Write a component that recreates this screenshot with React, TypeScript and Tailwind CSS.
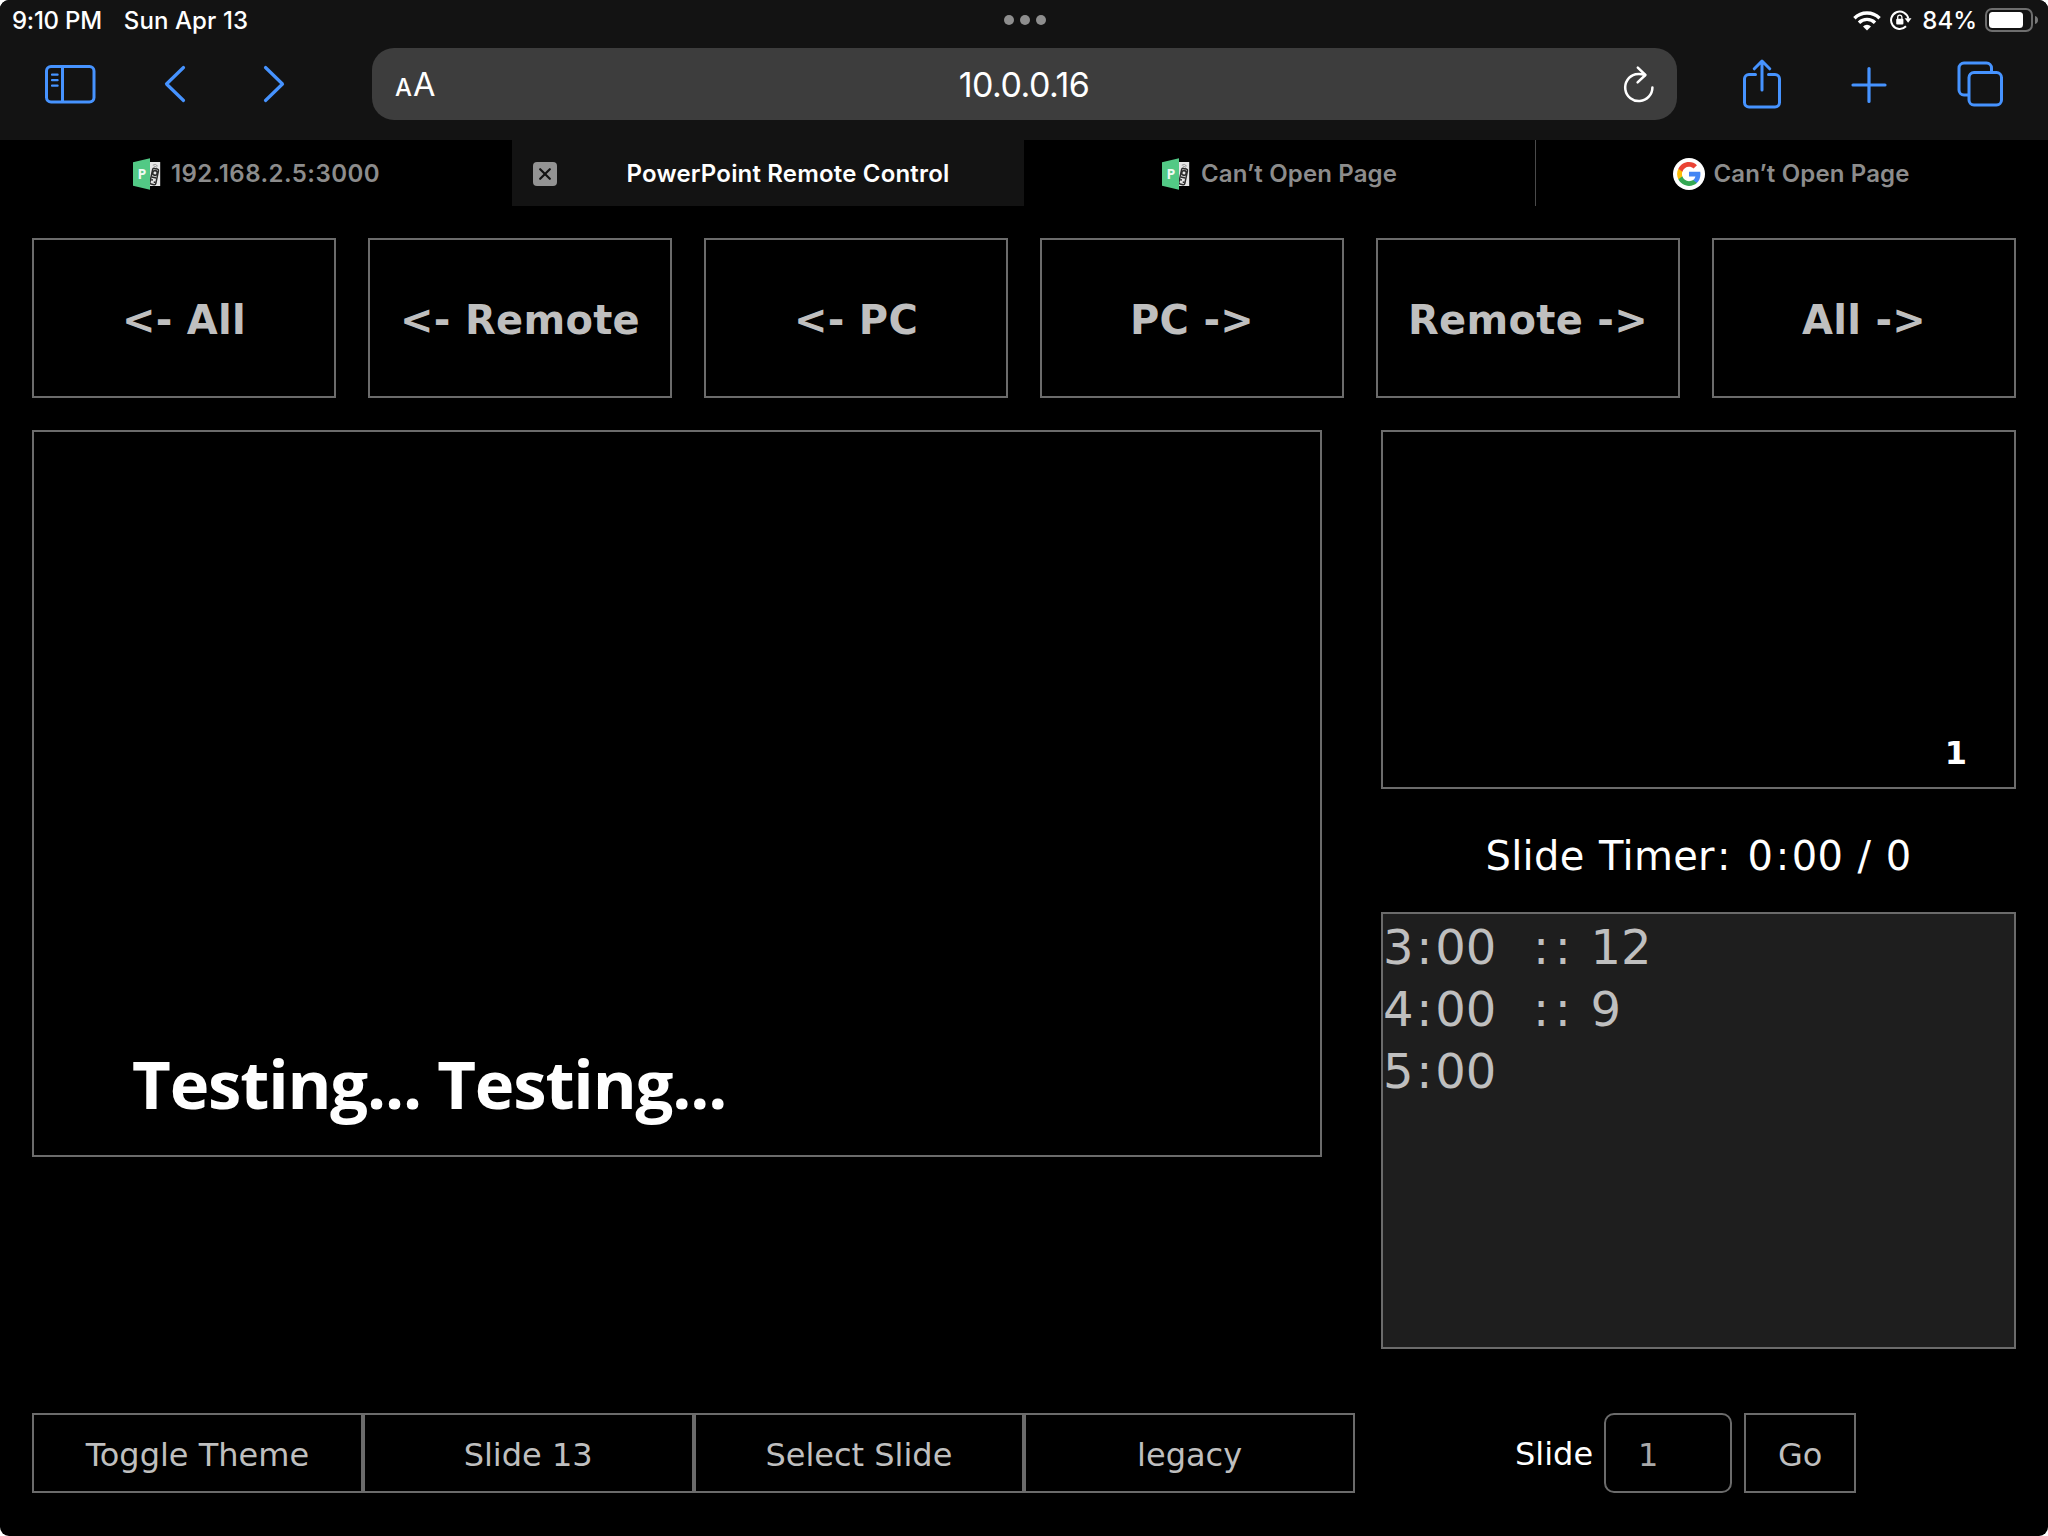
import React from "react";

const BLUE = "#4693ff";

function SidebarIcon() {
  return (
    <svg width="52" height="40" viewBox="0 0 52 40" fill="none" stroke={BLUE} strokeWidth="3">
      <rect x="2.5" y="2.5" width="47.5" height="35.5" rx="4.5" />
      <path d="M18.5 2.5v35.5" />
      <path d="M8 10.700h5.600M8 16.200h5.600M8 21.700h5.600" strokeWidth="2.2" strokeLinecap="round" />
    </svg>
  );
}

function Chevron({ flip = false }: { flip?: boolean }) {
  return (
    <svg width="22" height="38" viewBox="0 0 22 38" fill="none" stroke={BLUE} strokeWidth="3.2" strokeLinecap="round" strokeLinejoin="round" className={flip ? "rotate-180" : ""}>
      <path d="M19.5 2.5L2.500 19l17 16.500" />
    </svg>
  );
}

function ReloadIcon() {
  return (
    <svg width="32" height="38" viewBox="0 0 32 38" fill="none" stroke="#fff" strokeWidth="2.5" strokeLinecap="round" strokeLinejoin="round">
      <path d="M29.400 22.500A13.600 13.600 0 1 1 12.500 9.300Q17 8.300 22 10" />
      <path d="M14.800 2.600l7.600 7.400-7.800 7.400" />
    </svg>
  );
}

function ShareIcon() {
  return (
    <svg width="40" height="50" viewBox="0 0 40 50" fill="none" stroke={BLUE} strokeWidth="3" strokeLinecap="round" strokeLinejoin="round">
      <path d="M13.500 15.500H7A4.500 4.500 0 0 0 2.500 20v23.500A4.500 4.500 0 0 0 7 48h26a4.500 4.500 0 0 0 4.500-4.500V20a4.500 4.500 0 0 0-4.500-4.500h-6.500" />
      <path d="M20 31V3M12.300 9.800L20 2l7.700 7.800" />
    </svg>
  );
}

function PlusIcon() {
  return (
    <svg width="36" height="36" viewBox="0 0 36 36" fill="none" stroke={BLUE} strokeWidth="3.2" strokeLinecap="round">
      <path d="M18 1.600v32.800M2 18h32" />
    </svg>
  );
}

function TabsIcon() {
  return (
    <svg width="46" height="46" viewBox="0 0 46 46" fill="none" stroke={BLUE} strokeWidth="3">
      <path d="M12 34H7a5 5 0 0 1-5-5V7a5 5 0 0 1 5-5h22.500a5 5 0 0 1 5 5v4.500" />
      <rect x="12" y="11.500" width="32.500" height="32.500" rx="5" />
    </svg>
  );
}

function WifiIcon() {
  return (
    <svg width="28" height="21" viewBox="0 0 28 21" fill="none" stroke="#fff" strokeWidth="3.400">
      <path d="M1.400 8.200a18 18 0 0 1 25.200 0" />
      <path d="M6 12.700a11.400 11.400 0 0 1 16 0" />
      <path d="M14 20.500l-4-4a5.700 5.700 0 0 1 8 0z" fill="#fff" stroke="none" />
    </svg>
  );
}

function RotationLockIcon() {
  return (
    <svg width="22" height="20" viewBox="0 0 22 20" fill="none">
      <path d="M16 16.300A8.700 8.700 0 1 1 18.300 8.500" stroke="#fff" strokeWidth="2" />
      <path d="M14.600 8.200h6.900l-3.400 4.600z" fill="#fff" />
      <rect x="6.200" y="8.700" width="7.200" height="5.900" rx="1" fill="#fff" />
      <path d="M7.700 9V7.300a2.100 2.100 0 0 1 4.200 0V9" stroke="#fff" strokeWidth="1.300" />
    </svg>
  );
}

function BatteryIcon() {
  return (
    <svg width="54" height="24" viewBox="0 0 54 24" fill="none">
      <rect x="1" y="1" width="46" height="22" rx="6" stroke="#6e6e6e" strokeWidth="2" />
      <rect x="4" y="4" width="34" height="16" rx="3.500" fill="#fff" />
      <path d="M50 8c2 .6 3 2 3 4s-1 3.400-3 4z" fill="#7a7a7a" />
    </svg>
  );
}

function RemoteFavicon() {
  return (
    <svg width="28" height="32" viewBox="0 0 28 32" className="shrink-0">
      <path d="M15 4h12.200v24H15z" fill="#e6e6e6" />
      <g transform="rotate(12 21 18)" fill="none" stroke="#2b2b2b">
        <rect x="18.300" y="10.500" width="6" height="16" rx="1.500" strokeWidth="1.500" />
        <circle cx="21.300" cy="14.800" r="2.300" strokeWidth="1.700" />
        <path d="M19 19.500h4.600M19 22.200h1.800M22 24h1.800" strokeWidth="1.500" />
      </g>
      <path d="M19.800 7.200q2.800-2 5 1M20.800 9q1.800-1.200 3.200.4" stroke="#8a8a8a" strokeWidth=".9" fill="none" />
      <path d="M0 4.200L17 .3v31.400L0 27.800z" fill="#52c985" />
      <text x="4.600" y="20.700" fill="#eefaf3" fontFamily="Open Sans, sans-serif" fontWeight="700" fontSize="14">P</text>
    </svg>
  );
}

function GoogleFavicon() {
  return (
    <svg width="32" height="32" viewBox="0 0 32 32" className="shrink-0">
      <circle cx="16" cy="16" r="16" fill="#fff" />
      <g transform="translate(3 3) scale(1.083)">
        <path fill="#4285F4" d="M22.560 12.250c0-.78-.07-1.530-.2-2.250H12v4.260h5.920c-.26 1.370-1.040 2.530-2.210 3.310v2.770h3.570c2.080-1.920 3.280-4.740 3.280-8.090z" />
        <path fill="#34A853" d="M12 23c2.970 0 5.460-.98 7.280-2.660l-3.570-2.770c-.98.66-2.230 1.060-3.710 1.060-2.860 0-5.290-1.930-6.160-4.530H2.180v2.840C3.990 20.530 7.700 23 12 23z" />
        <path fill="#FBBC05" d="M5.840 14.090c-.22-.66-.35-1.360-.35-2.090s.13-1.430.35-2.090V7.070H2.180C1.430 8.550 1 10.220 1 12s.43 3.450 1.180 4.930l3.660-2.840z" />
        <path fill="#EA4335" d="M12 5.380c1.620 0 3.060.56 4.210 1.640l3.150-3.150C17.450 2.090 14.970 1 12 1 7.700 1 3.990 3.470 2.180 7.070l3.660 2.840c.87-2.600 3.300-4.530 6.160-4.530z" />
      </g>
    </svg>
  );
}

function StatusBar() {
  return (
    <div className="grid h-10 grid-cols-3 items-center pl-3 pr-[9px] text-[24px] leading-none font-medium text-white">
      <div className="flex gap-[22px] pt-px">
        <span className="tracking-[-0.25px]">9:10 PM</span>
        <span className="tracking-[0.1px]">Sun Apr 13</span>
      </div>
      <div className="flex justify-center gap-1.5 pr-px">
        <span className="size-2.5 rounded-full bg-[#8e8e8e]" />
        <span className="size-2.5 rounded-full bg-[#8e8e8e]" />
        <span className="size-2.5 rounded-full bg-[#8e8e8e]" />
      </div>
      <div className="flex items-center justify-end">
        <WifiIcon />
        <span className="mr-2.5 ml-[9px]"><RotationLockIcon /></span>
        <span className="mr-2 pt-px">84%</span>
        <BatteryIcon />
      </div>
    </div>
  );
}

function Toolbar() {
  return (
    <div className="flex h-[100px] items-start pt-2">
      <div className="flex h-[72px] w-[372px] items-center pl-11">
        <SidebarIcon />
        <span className="ml-[68px]"><Chevron /></span>
        <span className="ml-[77px]"><Chevron flip /></span>
      </div>
      <div className="grid h-[72px] w-[1305px] grid-cols-3 items-center rounded-[22px] bg-[#3d3d3d] px-[22px] text-white">
        <div className="flex items-baseline gap-px pt-0.5 pl-px leading-none">
          <span className="text-[24px] font-medium">A</span>
          <span className="text-[32.500px]">A</span>
        </div>
        <div className="pt-px pr-px text-center text-[34px] leading-none tracking-[-0.5px]">10.0.0.16</div>
        <div className="flex justify-end"><ReloadIcon /></div>
      </div>
      <div className="flex h-[72px] flex-1 items-center pl-[65px]">
        <ShareIcon />
        <span className="ml-[69px] pt-px"><PlusIcon /></span>
        <span className="ml-[70px]"><TabsIcon /></span>
      </div>
    </div>
  );
}

function TabBar() {
  const idle = "flex items-center justify-center pt-[2px] text-[#8c8c8c]";
  return (
    <div className="grid h-[66px] grid-cols-4 text-[24px] leading-none font-semibold tracking-[0.150px]">
      <div className={idle + " gap-2.5 pl-px tracking-[0.450px]"}><RemoteFavicon />192.168.2.5:3000</div>
      <div className="flex items-center bg-[#131313] pt-[2px] pl-[21px] text-white">
        <span className="flex size-6 items-center justify-center rounded-[4px] bg-[#939393]">
          <svg width="12" height="12" viewBox="0 0 12 12" stroke="#131313" strokeWidth="2.200" strokeLinecap="round">
            <path d="M1.200 1.200l9.600 9.600M10.800 1.200l-9.600 9.600" />
          </svg>
        </span>
        <span className="flex-1 pr-[10px] pl-[5px] text-center tracking-[0.180px]">PowerPoint Remote Control</span>
      </div>
      <div className={idle + " gap-[11px] border-r border-[#4a4a4a]"}><RemoteFavicon />Can’t Open Page</div>
      <div className={idle + " gap-2 pr-px"}><GoogleFavicon />Can’t Open Page</div>
    </div>
  );
}

function Wide({ text }: { text: string }) {
  return (
    <>
      {text.split(/(:)/).map((part, i) =>
        part === ":" ? <span key={i} className="mx-[0.058em]">:</span> : <React.Fragment key={i}>{part}</React.Fragment>
      )}
    </>
  );
}

const NAV = ["<- All", "<- Remote", "<- PC", "PC ->", "Remote ->", "All ->"];
const ACTIONS = ["Toggle Theme", "Slide 13", "Select Slide", "legacy"];
const NOTES = ["3:00  :: 12", "4:00  :: 9", "5:00"];

export default function App() {
  return (
    <div className="h-[1536px] w-[2048px] bg-white">
      <div className="h-full w-full overflow-hidden rounded-[9px] bg-black">
        <header className="font-['Inter',sans-serif]">
          <div className="bg-[#131313]">
            <StatusBar />
            <Toolbar />
          </div>
          <TabBar />
        </header>
        <main className="px-8 pt-8 font-['DejaVu_Sans',sans-serif] text-[#bfbfbf]">
          <div className="grid grid-cols-6 gap-8">
            {NAV.map((label) => (
              <button key={label} className="h-[160px] border-2 border-[#6b6b6b] pt-1 text-[40px] font-bold tracking-[0.3px] whitespace-nowrap">
                {label}
              </button>
            ))}
          </div>
          <div className="mt-8 flex h-[919px] items-start justify-between">
            <section className="flex h-[727px] w-[1290px] items-end border-2 border-[#6b6b6b] pb-[32px] pl-[98px]">
              <p className="font-['Open_Sans',sans-serif] text-[67px] leading-[80px] font-bold tracking-[-1.150px] whitespace-nowrap text-white">Testing... Testing...</p>
            </section>
            <aside className="w-[635px]">
              <div className="flex h-[359px] items-end justify-end border-2 border-[#6b6b6b] pr-[47px] pb-[15px] text-[32px] leading-[38px] font-bold text-white">1</div>
              <p className="flex h-[123px] items-center justify-center pt-2.5 text-[40px] tracking-[0.3px] whitespace-pre text-white">
                <span className="[word-spacing:0.034em]"><Wide text="Slide Timer: 0:00 / 0" /></span>
              </p>
              <div className="h-[437px] border-2 border-[#6b6b6b] bg-[#1e1e1e] pt-[2px] text-[48px] leading-[62px] whitespace-pre [word-spacing:0.034em]">
                {NOTES.map((n) => (
                  <p key={n}><Wide text={n} /></p>
                ))}
              </div>
            </aside>
          </div>
          <footer className="mt-16 flex h-20 items-center text-[32px]">
            <div className="grid h-20 w-[1323px] grid-cols-4">
              {ACTIONS.map((a) => (
                <button key={a} className="border-2 border-[#6b6b6b] pt-1">{a}</button>
              ))}
            </div>
            <span className="ml-[160px] pt-0.5 text-white">Slide</span>
            <span className="ml-[11px] flex h-20 w-32 items-center rounded-[10px] border-2 border-[#6b6b6b] pt-1 pl-8 text-[#a9a9a9]">1</span>
            <button className="ml-3 h-20 w-28 border-2 border-[#6b6b6b] pt-1">Go</button>
          </footer>
        </main>
      </div>
    </div>
  );
}
